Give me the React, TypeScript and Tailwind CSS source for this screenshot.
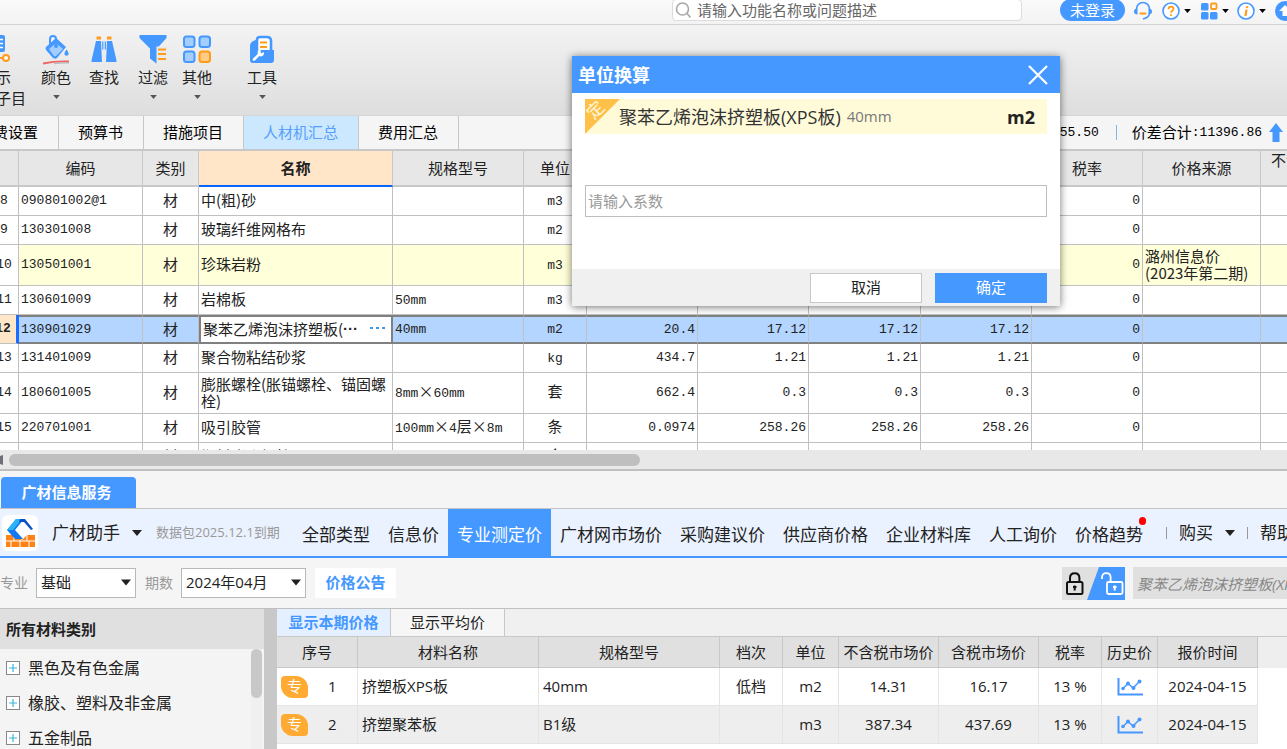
import type { ReactNode } from "react";
import clsx from "clsx";

const uiFont = "font-['Open_Sans','Noto_Sans_CJK_SC',sans-serif]";
const gridFont = "font-['Noto_Sans_CJK_SC',sans-serif]";
const monoFont = "font-['Liberation_Mono','Noto_Sans_CJK_SC',monospace]";

interface Material {
  no: number;
  code: string;
  name: string;
  spec?: string;
  unit: string;
  values?: string[];
  source?: string;
  tall?: boolean;
}

const materials: Material[] = [
  { no: 8, code: "090801002@1", name: "中(粗)砂", unit: "m3" },
  { no: 9, code: "130301008", name: "玻璃纤维网格布", unit: "m2" },
  { no: 10, code: "130501001", name: "珍珠岩粉", unit: "m3", source: "潞州信息价(2023年第二期)", tall: true },
  { no: 11, code: "130601009", name: "岩棉板", spec: "50mm", unit: "m3" },
  { no: 12, code: "130901029", name: "聚苯乙烯泡沫挤塑板(", spec: "40mm", unit: "m2", values: ["20.4", "17.12", "17.12", "17.12"] },
  { no: 13, code: "131401009", name: "聚合物粘结砂浆", unit: "kg", values: ["434.7", "1.21", "1.21", "1.21"] },
  { no: 14, code: "180601005", name: "膨胀螺栓(胀锚螺栓、锚固螺栓)", spec: "8mm×60mm", unit: "套", values: ["662.4", "0.3", "0.3", "0.3"], tall: true },
  { no: 15, code: "220701001", name: "吸引胶管", spec: "100mm×4层×8m", unit: "条", values: ["0.0974", "258.26", "258.26", "258.26"] },
  { no: 16, code: "", name: "塑料膨胀螺栓", unit: "个" },
];

const quotes = [
  { no: 1, name: "挤塑板XPS板", spec: "40mm", grade: "低档", unit: "m2", net: "14.31", gross: "16.17", tax: "13 %", date: "2024-04-15" },
  { no: 2, name: "挤塑聚苯板", spec: "B1级", grade: "", unit: "m3", net: "387.34", gross: "437.69", tax: "13 %", date: "2024-04-15" },
];

const categories = ["黑色及有色金属", "橡胶、塑料及非金属", "五金制品"];
const priceTabs = ["全部类型", "信息价", "专业测定价", "广材网市场价", "采购建议价", "供应商价格", "企业材料库", "人工询价", "价格趋势"];

function Caret({ className }: { className?: string }) {
  return (
    <svg viewBox="0 0 10 6" className={clsx("shrink-0 fill-current", className)} aria-hidden="true">
      <path d="M0 0h10L5 6z" />
    </svg>
  );
}

function TopBar() {
  return (
    <header className="flex h-[25px] shrink-0 items-start justify-end overflow-hidden border-b border-[#d2d2d2] bg-gradient-to-b from-[#fafafa] to-[#f3f3f3]">
      <label className="-mt-px mr-[38px] flex h-[22px] w-[350px] items-center gap-1 rounded border border-[#dcdcdc] bg-white pl-0.5">
        <svg viewBox="0 0 18 18" className="h-[18px] w-[18px] shrink-0" fill="none" stroke="#a8a8a8" strokeWidth="1.6">
          <circle cx="7.5" cy="8" r="6" />
          <path d="M12 12.5l3.5 4" />
        </svg>
        <input
          aria-label="搜索"
          placeholder="请输入功能名称或问题描述"
          className="min-w-0 flex-1 text-[15px] leading-5 outline-none placeholder:text-[#666]"
        />
      </label>
      <button className="-mt-px h-[22px] w-[65px] rounded-full bg-[#4598ff] text-[15px] leading-[22px] text-white">未登录</button>
      <div className="-mr-2 ml-2 flex h-[21px] items-center">
        <button aria-label="客服" className="mr-[9px]">
          <svg viewBox="0 0 20 20" className="h-5 w-5" fill="none">
            <path d="M3.5 8a6.5 6.5 0 0 1 13 0M16.5 12c0 3-2.5 5-6.5 6" stroke="#4598ff" strokeWidth="1.6" />
            <path d="M4.5 7.5v6c-2.4 0-3.5-1.2-3.5-3s1.1-3 3.5-3zM15.5 7.5v6c2.4 0 3.5-1.2 3.5-3s-1.1-3-3.5-3z" fill="#4598ff" />
            <path d="M7.5 12.5h5" stroke="#ff9c1a" strokeWidth="2.2" strokeLinecap="round" />
          </svg>
        </button>
        <button aria-label="帮助" className="mr-[9px] flex items-center gap-1">
          <svg viewBox="0 0 18 18" className="h-[18px] w-[18px]" fill="none">
            <circle cx="9" cy="9" r="8" stroke="#4598ff" strokeWidth="1.6" fill="#fff" />
            <path d="M6.5 7.2c0-1.7 1.1-2.5 2.5-2.5s2.5.9 2.5 2.2c0 1.7-2.5 1.9-2.5 3.8M9 12.2v1.8" stroke="#ff9c1a" strokeWidth="1.8" />
          </svg>
          <Caret className="h-1 w-[7px]" />
        </button>
        <button aria-label="应用" className="mr-2 flex items-center gap-1">
          <svg viewBox="0 0 18 18" className="h-[18px] w-[18px]">
            <rect x="1" y="1" width="7.5" height="7.5" rx="1.5" fill="#4598ff" />
            <rect x="1" y="10" width="7.5" height="7.5" rx="1.5" fill="#4598ff" />
            <rect x="10" y="10" width="7.5" height="7.5" rx="1.5" fill="#4598ff" />
            <rect x="11" y="1.5" width="5.5" height="5.5" rx="1" fill="none" stroke="#ff9c1a" strokeWidth="1.8" />
          </svg>
          <Caret className="h-1 w-[7px]" />
        </button>
        <button aria-label="关于" className="mr-[9px] flex items-center gap-1">
          <svg viewBox="0 0 18 18" className="h-[18px] w-[18px]" fill="none">
            <circle cx="9" cy="9" r="8" stroke="#4598ff" strokeWidth="1.6" fill="#fff" />
            <path d="M10.2 4.2l-.3 1.8M9.6 7.5L8.4 14" stroke="#ff9c1a" strokeWidth="2.2" />
          </svg>
          <Caret className="h-1 w-[7px]" />
        </button>
        <button aria-label="收起" className="h-5 w-5 shrink-0">
          <svg viewBox="0 0 20 20" className="h-5 w-5">
            <circle cx="10" cy="10" r="10" fill="#4598ff" />
            <path d="M10 4l6 6h-3.5v5h-5v-5H4z" fill="#fff" />
          </svg>
        </button>
      </div>
    </header>
  );
}

function RibbonButton({ label, menu, children }: { label: string; menu?: boolean; children: ReactNode }) {
  return (
    <button className="flex w-11 flex-col items-center">
      <svg viewBox="0 0 30 30" className="h-[30px] w-[30px]" aria-hidden="true">
        {children}
      </svg>
      <span className="mt-0.5 text-[15px] leading-5">{label}</span>
      {menu && <Caret className="mt-2 h-1 w-[7px] text-[#555]" />}
    </button>
  );
}

function Ribbon() {
  return (
    <div className="flex h-[91px] shrink-0 items-start overflow-hidden border-b border-[#d6d6d6] bg-gradient-to-b from-[#f3f3f3] to-[#dedede] pt-2.5 text-[#222]">
      <button className="-ml-1 w-[38px] text-left text-[15px]">
        <svg viewBox="0 0 30 30" className="h-[30px] w-[30px]" aria-hidden="true" fill="none">
          <path d="M0 0h7q2 0 2 2v13q0 2-2 2H0z" fill="#4598ff" />
          <path d="M0 4.500h7M0 8.500h7M0 12.500h7" stroke="#fff" strokeWidth="1.6" />
          <path d="M0 23h7" stroke="#ff9c1a" strokeWidth="2" />
          <circle cx="10" cy="23" r="3" stroke="#ff9c1a" strokeWidth="2" fill="#fff" />
        </svg>
        <span className="mt-0.5 block leading-5">示</span>
        <span className="block leading-[22px]">子目</span>
      </button>
      <div className="flex gap-1">
        <RibbonButton label="颜色" menu>
          <path d="M5 12L15 3l10 9-9 11q-2 1.5-4 0l-7-8q-1-1.5 0-3z" fill="#4598ff" />
          <path d="M8 14l7-6 7 6-7 7q-1 .6-2 0z" fill="#a3ceff" />
          <path d="M9 12V4q0-3 3-3t3 3v6" fill="none" stroke="#4598ff" strokeWidth="2" />
          <circle cx="15" cy="11" r="2" fill="#4598ff" />
          <path d="M25.5 14.5q3 4 1.8 5.5-1.8 1.5-3.5 0-1.2-1.8 1.7-5.5z" fill="#4598ff" />
          <path d="M2 28.5Q14 26 28 26.5" stroke="#f06464" strokeWidth="1.8" fill="none" />
          <path d="M13 28.5q10-1 15-.5" stroke="#bbb" strokeWidth="1.5" fill="none" />
        </RibbonButton>
        <RibbonButton label="查找">
          <path d="M7 6h5l1 21H3q-.8 0-.5-1.5zM18 6h5l4.5 19.5q.3 1.5-.5 1.5H17z" fill="#4598ff" />
          <path d="M13.2 6.5h1.2v8h-1.2zM15.7 6.5h1.2v8h-1.2z" fill="#4598ff" />
          <path d="M7.5 1.5H12v3H7.5zM18 1.5h4.5v3H18z" fill="#ff9c1a" />
        </RibbonButton>
      </div>
      <div className="ml-[5px] flex">
        <RibbonButton label="过滤" menu>
          <path d="M1.5 0h27v3L19 13.5V29l-7-5.5v-10L1.5 3z" fill="#4598ff" />
          <path d="M18.5 11.5H30V29H18.5z" fill="#eaeaea" />
          <path d="M20 14.5h8M20 19h8M20 24h8" stroke="#ff9c1a" strokeWidth="2" />
        </RibbonButton>
        <RibbonButton label="其他" menu>
          <rect x="2" y="1.5" width="10.5" height="10.5" rx="2.5" fill="#a3ceff" stroke="#4598ff" strokeWidth="2" />
          <rect x="17.5" y="1.5" width="10.5" height="10.5" rx="2.5" fill="#a3ceff" stroke="#4598ff" strokeWidth="2" />
          <rect x="2" y="16.5" width="10.5" height="10.5" rx="2.5" fill="#a3ceff" stroke="#4598ff" strokeWidth="2" />
          <rect x="17.5" y="16.5" width="10.5" height="10.5" rx="2.5" fill="#ffcb85" stroke="#ff9c1a" strokeWidth="2" />
        </RibbonButton>
      </div>
      <div className="ml-[21px] flex">
        <RibbonButton label="工具" menu>
          <path d="M10 17V5q0-3 3-3h7q4 0 4 4v11z" fill="#fff" stroke="#4598ff" strokeWidth="2.6" />
          <path d="M13 7.5h7M13 12h7" stroke="#ff9c1a" strokeWidth="2" />
          <path d="M3 10q1-4 6-5v10h18v10q0 3-3 3H6q-3 0-3-3z" fill="#4598ff" />
          <path d="M7 24.5l5.5-5.5" stroke="#fff" strokeWidth="2.6" strokeLinecap="round" />
          <path d="M11 15.5q1-1.5 3-1l-.6 2.6 1.5 1.2 2-1.3q.8 2.5-1 3.8-2 1.2-3.8 0-2.2-2-1.1-5.3z" fill="#fff" />
        </RibbonButton>
      </div>
    </div>
  );
}

function SheetTabs() {
  const tabs = ["预算书", "措施项目", "人材机汇总", "费用汇总"];
  return (
    <nav className="flex h-[35px] shrink-0 items-stretch overflow-hidden border-b-2 border-[#c8c8c8] bg-[#f5f5f5] text-[15px]">
      <button className="-ml-[7px] border-r border-[#c8c8c8] pr-5">费设置</button>
      {tabs.map((t) => (
        <button
          key={t}
          className={clsx("border-r border-[#c8c8c8] pr-5 pl-[19px]", t === "人材机汇总" ? "bg-[#cce8ff] text-[#56a0fb]" : "text-black")}
        >
          {t}
        </button>
      ))}
      <div className="ml-auto flex items-center pr-1">
        <span className={clsx(monoFont, "text-[13px]")}>855.50</span>
        <span className="mr-[15px] ml-[17px] h-[15px] w-px bg-[#8db4de]" />
        <span>价差合计</span>
        <span className={clsx(monoFont, "mr-[7px] text-[13px]")}>:11396.86</span>
        <svg viewBox="0 0 14 19" className="h-[19px] w-3.5" fill="#4598ff" aria-hidden="true">
          <path d="M7 0l7 9h-3.5v10h-7V9H0z" />
        </svg>
      </div>
    </nav>
  );
}

const cell = "overflow-hidden border-r border-b border-[#c0c0c0] px-0.5";

// Latin runs are set half as wide as the Chinese ones
function Spec({ text }: { text: string }) {
  return text.split(/([^\x00-\x7f]+)/).map((part, i) => (
    <span key={i} className={i % 2 ? "text-[15px]" : clsx(monoFont, "text-[13px]")}>
      {part}
    </span>
  ));
}

function MaterialRow({ row }: { row: Material }) {
  const selected = row.no === 12;
  const fill = selected
    ? "border-t-2 border-b-2! border-y-[#808080]! bg-[#b3d5ff]"
    : row.no === 10
      ? "bg-[#ffffd9]"
      : "bg-white";
  return (
    <tr className={row.tall ? "h-[41px]" : "h-[29px]"}>
      <td
        className={clsx(
          "overflow-hidden border-b border-[#c0c0c0] text-center text-[13px]",
          monoFont,
          selected ? "border-r-[3px] border-r-[#1a6dff] bg-[#ffe6c8] font-bold" : "border-r bg-white",
        )}
      >
        {row.no}
      </td>
      <td className={clsx(cell, fill, monoFont, "text-[13px]")}>{row.code}</td>
      <td className={clsx(cell, fill, "pb-[3px] text-center leading-[17px]")}>材</td>
      <td
        className={clsx(
          cell,
          selected ? "border-2! border-[#808080]! bg-white whitespace-nowrap" : fill,
          "pb-[3px] leading-[17px]",
        )}
      >
        {selected ? (
          <div className="flex items-center">
            <span>{row.name}</span>
            <span className="font-['Liberation_Sans',sans-serif] font-bold">···</span>
            <button aria-label="更多" className="mr-1 ml-auto flex gap-[3px]">
              <i className="h-0.5 w-[3px] bg-[#4598dd]" />
              <i className="h-0.5 w-[3px] bg-[#4598dd]" />
              <i className="h-0.5 w-[3px] bg-[#4598dd]" />
            </button>
          </div>
        ) : (
          row.name
        )}
      </td>
      <td className={clsx(cell, fill, "pb-[3px] leading-[17px] whitespace-nowrap")}>{row.spec && <Spec text={row.spec} />}</td>
      <td className={clsx(cell, fill, "pb-[3px] text-center leading-[17px]")}>
        <Spec text={row.unit} />
      </td>
      {(row.values ?? ["", "", "", ""]).map((v, i) => (
        <td key={i} className={clsx(cell, fill, monoFont, "text-right text-[13px]")}>
          {v}
        </td>
      ))}
      <td className={clsx(cell, fill, monoFont, "text-right text-[13px]")}>0</td>
      <td className={clsx(cell, fill, "pb-[3px] leading-[17px]")}>{row.source}</td>
      <td className={clsx(cell, fill)} />
    </tr>
  );
}

function MaterialGrid() {
  const th = "border-r border-b-2 border-[#c8c8c8] bg-[#e7e7e7] font-normal";
  return (
    <div className={clsx("h-[299px] shrink-0 overflow-hidden", gridFont)}>
      <table className="-ml-2.5 w-[1382px] table-fixed border-separate border-spacing-0 text-[15px] text-[#222]">
        <colgroup>
          <col className="w-[29px]" />
          <col className="w-[124px]" />
          <col className="w-14" />
          <col className="w-[194px]" />
          <col className="w-[131px]" />
          <col className="w-[63px]" />
          <col className="w-[111px]" />
          <col className="w-[111px]" />
          <col className="w-[112px]" />
          <col className="w-[111px]" />
          <col className="w-[111px]" />
          <col className="w-[118px]" />
          <col className="w-[111px]" />
        </colgroup>
        <thead>
          <tr className="h-9">
            <th className={th} />
            <th className={th}>编码</th>
            <th className={th}>类别</th>
            <th className="border-r border-b-2 border-r-[#c8c8c8] border-b-[#0a64ff] bg-[#ffe6c8] font-bold">名称</th>
            <th className={th}>规格型号</th>
            <th className={th}>单位</th>
            <th className={th} />
            <th className={th} />
            <th className={th} />
            <th className={th} />
            <th className={th}>税率</th>
            <th className={th}>价格来源</th>
            <th className={clsx(th, "align-top leading-[18px]")}>不含税市场价</th>
          </tr>
        </thead>
        <tbody>
          {materials.map((row) => (
            <MaterialRow key={row.no} row={row} />
          ))}
        </tbody>
      </table>
    </div>
  );
}

function GridScrollbar() {
  return (
    <div className="flex h-[21px] shrink-0 items-center border-b-2 border-[#c0c0c0] bg-[#e8e8e8]">
      <svg viewBox="0 0 3 10" className="mr-1.5 h-2.5 w-[3px] fill-[#707078]" aria-hidden="true">
        <path d="M0 1l3-1v10L0 9z" />
      </svg>
      <div className="h-3 w-[49%] rounded-full bg-[#bfbfbf]" />
    </div>
  );
}

function UnitDialog() {
  return (
    <div
      role="dialog"
      aria-labelledby="unit-title"
      className="absolute top-14 left-[572px] flex w-[488px] flex-col bg-white shadow-[0_1px_8px_rgba(0,0,0,0.55)]"
    >
      <div className="flex h-[37px] items-center justify-between bg-[#4598ff] pr-3 pl-1.5 text-white">
        <h2 id="unit-title" className="text-lg font-bold">
          单位换算
        </h2>
        <button aria-label="关闭">
          <svg viewBox="0 0 20 20" className="h-5 w-5" stroke="#fff" strokeWidth="2.2">
            <path d="M1 1l18 18M19 1L1 19" />
          </svg>
        </button>
      </div>
      <div className="px-[13px] pt-1.5 pb-[52px]">
        <div className="relative flex h-[35px] items-center bg-[#fffbd9] pr-3 pl-[34px] whitespace-nowrap">
          <svg viewBox="0 0 35 35" className="absolute top-0 left-0 h-[35px] w-[35px]" aria-hidden="true">
            <path d="M0 0h35L0 35z" fill="#ffc04a" />
          </svg>
          <span className="absolute top-0.5 left-0.5 -rotate-45 text-[17px] leading-[18px] text-[#fff7dc]">定</span>
          <span className="text-lg text-[#333]">聚苯乙烯泡沫挤塑板(XPS板)</span>
          <span className="ml-1.5 text-[15px] text-[#777]">40mm</span>
          <span className="ml-auto text-lg font-bold text-[#222]">m2</span>
        </div>
        <input
          aria-label="系数"
          placeholder="请输入系数"
          className="mt-[51px] block h-8 w-full border border-[#bdbdbd] px-0.5 text-[15px] outline-none placeholder:text-[#999]"
        />
      </div>
      <div className="flex h-[37px] items-center justify-end gap-[13px] bg-[#f0f0f0] pr-[13px] text-[15px]">
        <button className="h-[30px] w-28 border border-[#c8c8c8] bg-white text-[#222]">取消</button>
        <button className="h-[30px] w-28 bg-[#4598ff] text-white">确定</button>
      </div>
    </div>
  );
}

function AssistantBar() {
  return (
    <div className="flex h-[49px] shrink-0 items-center overflow-hidden border-b-2 border-[#4598ff] bg-[#ebf2ff] text-[17px] whitespace-nowrap text-[#222]">
      <svg viewBox="0 0 36 36" className="ml-0.5 h-9 w-9 shrink-0" aria-hidden="true">
        <rect width="36" height="36" rx="6" fill="#fff" />
        <path d="M4 20h10l6 5 5-5h8v12H4z" fill="#ff8214" />
        <path d="M4 26h29M12 20v6M25 20v6M9 26v6M18 25v7M27 26v6" stroke="#fff" strokeWidth="1" />
        <path d="M5 15L14 4h8l-9 11 8 9h-8z" fill="#1478f0" />
        <path d="M5 15L14 4h6l-9 11z" fill="#28b4f5" />
        <path d="M18 4h5l8 10-2 1-7-8h-5z" fill="#0a50c8" />
      </svg>
      <button className="ml-3.5 flex shrink-0 items-center gap-3">
        广材助手
        <Caret className="h-1.5 w-2.5" />
      </button>
      <span className="ml-3.5 w-[137px] shrink-0 text-[13px] text-[#999]">数据包2025.12.1到期</span>
      <nav className="flex h-full shrink-0">
        {priceTabs.map((t) => (
          <button
            key={t}
            className={clsx("relative h-full px-[9px] pt-1", t === "专业测定价" && "bg-[#4598ff] text-white")}
          >
            {t}
            {t === "价格趋势" && <i className="absolute top-2 right-1.5 h-2 w-[7px] rounded-full bg-[#ff0000]" />}
          </button>
        ))}
      </nav>
      <span className="mr-3 ml-3.5 h-3 w-px shrink-0 bg-[#999]" />
      <button className="flex shrink-0 items-center gap-3">
        购买
        <Caret className="h-1.5 w-2.5" />
      </button>
      <span className="mx-3 h-3 w-px shrink-0 bg-[#999]" />
      <button className="shrink-0">帮助</button>
    </div>
  );
}

function FilterSelect({ id, options, className }: { id: string; options: string[]; className: string }) {
  return (
    <div className={clsx("relative h-[30px] shrink-0 text-[15px] text-[#222]", className)}>
      <select id={id} className="h-full w-full appearance-none border border-[#b8b8b8] bg-white pr-5 pl-1 outline-none">
        {options.map((o) => (
          <option key={o}>{o}</option>
        ))}
      </select>
      <Caret className="pointer-events-none absolute top-[11px] right-[5px] h-[7px] w-2.5" />
    </div>
  );
}

function FilterBar() {
  return (
    <div className="flex h-[51px] shrink-0 items-center overflow-hidden border-b border-[#c0c0c0] bg-[#f5f5f5] text-sm text-[#999]">
      <label htmlFor="major" className="mr-2">
        专业
      </label>
      <FilterSelect id="major" options={["基础"]} className="w-[100px]" />
      <label htmlFor="period" className="mr-2 ml-[9px]">
        期数
      </label>
      <FilterSelect id="period" options={["2024年04月"]} className="w-[125px]" />
      <button className="ml-[9px] h-[30px] w-[81px] bg-white text-[15px] font-bold text-[#4598ff]">价格公告</button>
      <button aria-label="锁定" className="ml-auto h-[33px] w-[63px] shrink-0">
        <svg viewBox="0 0 63 33" className="h-[33px] w-[63px]" fill="none">
          <path d="M0 0h63v33H0z" fill="#e0e0e0" />
          <path d="M37 0h26v33H25z" fill="#4598ff" />
          <rect x="5" y="15" width="15.5" height="12" rx="1.5" stroke="#111" strokeWidth="2" />
          <path d="M8 15v-4q0-4.800 4.700-4.800t4.700 4.800v4" stroke="#111" strokeWidth="2" />
          <path d="M12.700 18.500v5M11 20h3.500" stroke="#111" strokeWidth="2" />
          <rect x="45" y="15" width="15.5" height="12" rx="1.5" stroke="#fff" strokeWidth="1.8" />
          <path d="M40 12v-1.500q0-4.300 4.300-4.300t4.300 4.300V15" stroke="#fff" strokeWidth="1.8" />
          <path d="M52.700 18.500v5M51 20h3.500" stroke="#fff" strokeWidth="2" />
        </svg>
      </button>
      <input
        aria-label="材料搜索"
        defaultValue="聚苯乙烯泡沫挤塑板(XPS板)"
        className="ml-2 h-8 w-[154px] shrink-0 bg-[#e0e0e0] pl-1 text-[15px] text-[#888] italic outline-none"
      />
    </div>
  );
}

function CategoryPane() {
  return (
    <aside className="flex w-[264px] shrink-0 flex-col bg-[#f4f4f4]">
      <h3 className="h-10 shrink-0 bg-[#e0e0e0] pl-1.5 text-[15px] leading-10 font-bold text-[#222]">所有材料类别</h3>
      <div className="flex min-h-0 flex-1 justify-between overflow-hidden">
        <ul className="pt-px text-base text-[#222]">
          {categories.map((c) => (
            <li key={c} className="flex h-[35px] items-center gap-2 pl-1.5">
              <button aria-label={`展开${c}`}>
                <svg viewBox="0 0 14 14" className="h-3.5 w-3.5" fill="none">
                  <rect x=".5" y=".5" width="13" height="13" stroke="#888" fill="#fff" />
                  <path d="M3 7h8M7 3v8" stroke="#3cb4dc" strokeWidth="1.2" />
                </svg>
              </button>
              {c}
            </li>
          ))}
        </ul>
        <div className="mr-0.5 w-[11px] bg-[#f0f0f0]">
          <div className="h-[49px] rounded-full bg-[#c8c8c8]" />
        </div>
      </div>
    </aside>
  );
}

function QuotePane() {
  const th = "border-r border-b border-[#c8c8c8] bg-[#e0e0e0] font-normal whitespace-nowrap";
  const td = "border-r border-b border-[#e4e4e4] text-center whitespace-nowrap";
  return (
    <section className="min-w-0 flex-1 overflow-hidden bg-white text-[15px] text-[#222]">
      <div className="flex h-7 border-b border-[#c8c8c8] bg-[#f0f0f0]">
        <button className="w-[114px] border-r border-[#c8c8c8] bg-[#e4f0ff] font-bold text-[#4598ff]">显示本期价格</button>
        <button className="w-[114px] border-r border-[#c8c8c8] bg-[#f6f6f6]">显示平均价</button>
      </div>
      <div className="bg-[linear-gradient(#eeeeee_31px,#ffffff_31px)]">
        <table className="w-[981px] table-fixed border-separate border-spacing-0">
          <colgroup>
            <col className="w-[81px]" />
            <col className="w-[181px]" />
            <col className="w-[181px]" />
            <col className="w-[63px]" />
            <col className="w-14" />
            <col className="w-[100px]" />
            <col className="w-[100px]" />
            <col className="w-[63px]" />
            <col className="w-14" />
            <col className="w-[100px]" />
          </colgroup>
          <thead>
            <tr className="h-[31px]">
              {["序号", "材料名称", "规格型号", "档次", "单位", "不含税市场价", "含税市场价", "税率", "历史价", "报价时间"].map((h) => (
                <th key={h} className={th}>
                  {h}
                </th>
              ))}
            </tr>
          </thead>
          <tbody>
            {quotes.map((q) => (
              <tr key={q.no} className={clsx("h-[38px]", q.no % 2 ? "bg-white" : "bg-[#eeeeee]")}>
                <td className={td}>
                  <div className="flex items-center pl-1">
                    <span className="h-[22px] w-[27px] rounded-tl-sm rounded-tr-xl rounded-br-sm rounded-bl-xl bg-[#ffaa32] leading-[21px] text-white">
                      专
                    </span>
                    <span className="ml-5">{q.no}</span>
                  </div>
                </td>
                <td className={clsx(td, "pl-1 text-left")}>{q.name}</td>
                <td className={clsx(td, "pl-1 text-left")}>{q.spec}</td>
                <td className={td}>{q.grade}</td>
                <td className={td}>{q.unit}</td>
                <td className={td}>{q.net}</td>
                <td className={td}>{q.gross}</td>
                <td className={td}>{q.tax}</td>
                <td className={td}>
                  <button aria-label="历史价走势" className="block w-full">
                    <svg viewBox="0 0 26 20" className="mx-auto h-5 w-[26px]" fill="none" stroke="#4598ff">
                      <path d="M1.5 1v16.5H26" strokeWidth="2" />
                      <path d="M6 11.5l5-5 5 4.5 6.5-6.5" strokeWidth="1.5" />
                      <g fill="#4598ff" stroke="none">
                        <circle cx="6" cy="11.5" r="1.8" />
                        <circle cx="11" cy="6.5" r="2" />
                        <circle cx="16.5" cy="11" r="2" />
                        <circle cx="22.5" cy="4.5" r="2" />
                      </g>
                    </svg>
                  </button>
                </td>
                <td className={td}>{q.date}</td>
              </tr>
            ))}
          </tbody>
        </table>
      </div>
    </section>
  );
}

export default function App() {
  return (
    <div className={clsx("relative flex h-screen flex-col overflow-hidden bg-[#f5f5f5] text-black", uiFont)}>
      <TopBar />
      <Ribbon />
      <SheetTabs />
      <MaterialGrid />
      <GridScrollbar />
      <div className="flex h-[38px] shrink-0 items-end border-b border-[#c4c4c4] bg-[#f5f5f5] pl-px">
        <button className="h-[31px] w-[135px] rounded-t-sm bg-[#4598ff] pr-1 text-[15px] font-bold text-white">广材信息服务</button>
      </div>
      <AssistantBar />
      <FilterBar />
      <main className="flex min-h-0 flex-1">
        <CategoryPane />
        <div className="w-[13px] shrink-0 bg-[#c8c8c8]" />
        <QuotePane />
      </main>
      <UnitDialog />
    </div>
  );
}
